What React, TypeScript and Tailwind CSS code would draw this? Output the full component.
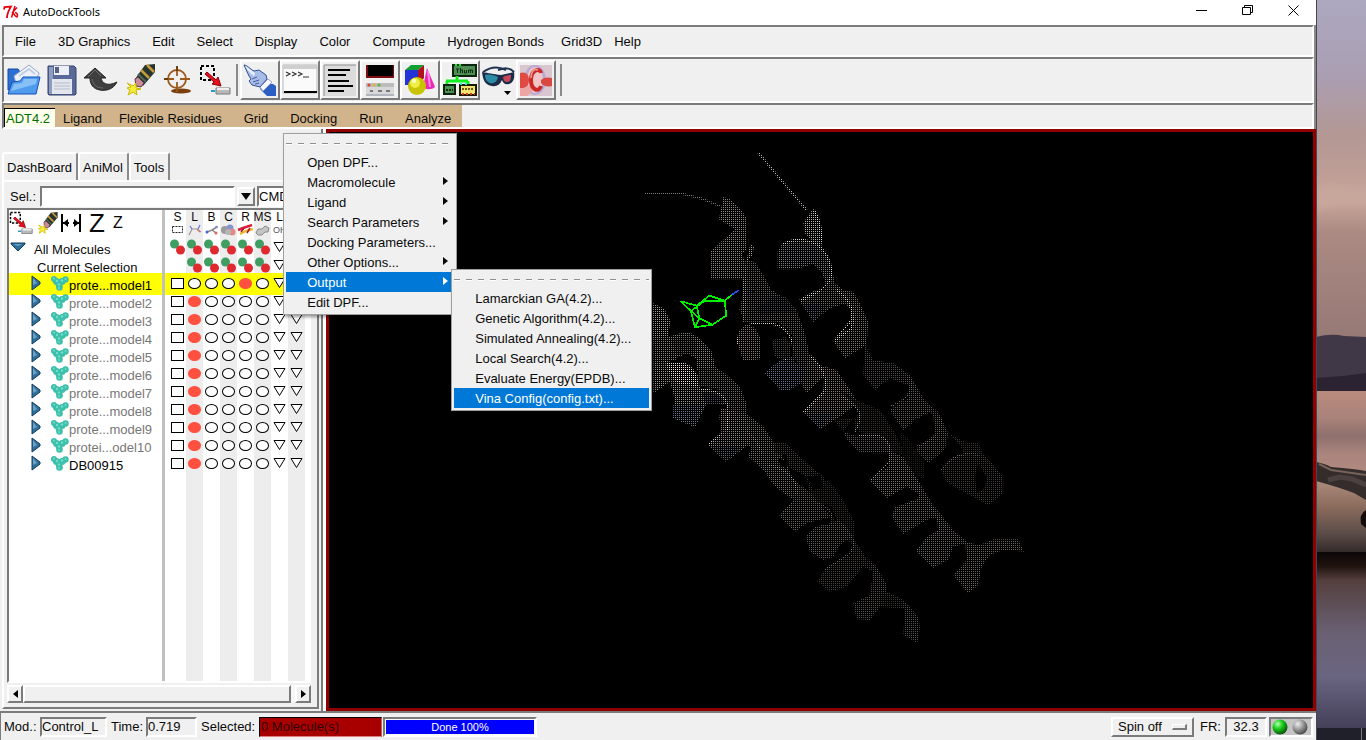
import React from "react";

const sunken = "border-2 border-t-[#7b7b7b] border-l-[#7b7b7b] border-r-white border-b-white";
const field = "border-2 border-t-[#7b7b7b] border-l-[#7b7b7b] border-r-white border-b-white";
const raised = "border-2 border-t-white border-l-white border-r-[#7b7b7b] border-b-[#7b7b7b]";

/* ---------- small icons ---------- */

function FeatherLogo() {
  return (
    <svg width="16" height="14" viewBox="0 0 16 14" fill="none" stroke="#e8000c" strokeWidth="1.8">
      <path d="M1 4.500 1.500 2l6.500-.5C6 5 4 8 4 13" />
      <path d="M12 1 8.500 12.500M9 8l5-5.500M10 7.500c1 2 2 4 4 4.500 1-2 .5-4-2-4.500" strokeWidth="1.500" />
    </svg>
  );
}

function OpenIcon() {
  return (
    <svg width="34" height="32" viewBox="0 0 34 32">
      <path d="M1 5h10l2 3h14v18H1z" fill="#2d6fd0" stroke="#1848a8" />
      <path d="M7 12 22 1l10 8-4 10H9z" fill="#eef2fc" stroke="#9aa8c8" />
      <path d="M12 12 22 5l6 5" fill="none" stroke="#c3cde6" strokeWidth="2" />
      <path d="M1 30 5 18l8-1 3-4h17l-4 17z" fill="#4f9bee" stroke="#1750b8" />
      <path d="m4 27 3-7 8-1 2-4h13l-1 5z" fill="#9fd0fa" opacity=".7" />
    </svg>
  );
}

function SaveIcon() {
  return (
    <svg width="30" height="32" viewBox="0 0 30 32">
      <path d="M1 2h26l2 2v26l-1 1H2l-1-1z" fill="#596a98" stroke="#34406c" />
      <path d="M2 3h4v27H2z" fill="#8f9cc2" />
      <path d="M7 2h15v9H7z" fill="#eceff5" />
      <path d="M8 3h4v6H8z" fill="#52618c" />
      <path d="M5 15h20v15H5z" fill="#e4e6ee" />
      <path d="M7 19h16M7 22h16M7 25h16" stroke="#b9bdcc" />
    </svg>
  );
}

function UndoIcon() {
  return (
    <svg width="36" height="28" viewBox="0 0 36 28">
      <path d="M1 12 12 2l11 10h-5c1 5 6 9 16 4-4 8-12 9-17 8-7-1-10-6-10-12z" fill="#3f3f3f" stroke="#242424" />
      <path d="m5 11 7-7 6 6M9 13c1 6 5 9 11 9" fill="none" stroke="#6b6b6b" />
    </svg>
  );
}

function EraserIcon({ size }: { size: number }) {
  return (
    <svg width={size} height={size} viewBox="0 0 32 32">
      <path d="m20 1 10-1v8L18 22l-8-7z" fill="#26332f" />
      <path d="m16 6 8 8M22 1l7 7" stroke="#c79a3a" strokeWidth="2.500" />
      <path d="m13 10 8 8" stroke="#4d6b52" strokeWidth="2" />
      <path d="m10 15 3-2 6 6-3 4-5-1z" fill="#c98b97" stroke="#623a44" />
      <path d="m2 19 6 3 3-3 0 5 5 1-5 1 1 5-4-3-5 3 2-5-3-2 4-1z" fill="#f7ee3a" stroke="#cdb800" />
    </svg>
  );
}

function TargetIcon() {
  return (
    <svg width="30" height="32" viewBox="0 0 30 32">
      <ellipse cx="18" cy="27" rx="10" ry="2.500" fill="#7a3f0c" />
      <circle cx="14" cy="15" r="9" fill="none" stroke="#9c5a1c" strokeWidth="1.800" />
      <path d="M14 2v10M14 18v10M1 15h10M17 15h10" stroke="#9c5a1c" strokeWidth="1.800" />
      <path d="M14 2v5M1 15h4" stroke="#5f3208" strokeWidth="1.500" />
    </svg>
  );
}

function SelectIcon({ size }: { size: number }) {
  return (
    <svg width={size} height={size} viewBox="0 0 32 32">
      <path d="M2 2h13v14H2z" fill="none" stroke="#000" strokeWidth="2" strokeDasharray="3 2" />
      <path d="m8 8 9 8 2-3 3 9-9-2 2-2-9-8z" fill="#e8101c" stroke="#8a0008" />
      <path d="M17 24h14v6H17z" fill="#b9b9b9" stroke="#7a7a7a" />
      <path d="M18 25h12" stroke="#efefef" strokeWidth="2" />
      <path d="M12 26h4v2h-4z" fill="#2a9bd0" />
    </svg>
  );
}

function HandIcon() {
  return (
    <svg width="34" height="34" viewBox="0 0 34 34">
      <path d="m20 20 10 1 3 2v10h-9l-7-7z" fill="#2c5fc4" />
      <path d="m17 24 8-8 4 3-9 9z" fill="#f8faff" stroke="#9aa9cc" />
      <path d="M1 2c3 0 6 4 10 6l5-1 7 5 1 4-7 8-8-2-3-4 2-2-2-3z" fill="#a8bcea" stroke="#34508e" />
      <path d="M2 3c3 1 7 5 10 7l-1 3C8 11 4 7 2 3z" fill="#e8eefc" />
      <path d="m9 16 5-2M10 19l6-2M12 21l4-1" fill="none" stroke="#44619f" />
    </svg>
  );
}

function TerminalIcon() {
  return (
    <svg width="36" height="34" viewBox="0 0 36 34">
      <path d="M1 2h34v28H1z" fill="#fafafa" stroke="#bdbdbd" />
      <path d="M1 2h34v4H1z" fill="#cfcfcf" />
      <path d="M2 29h33" stroke="#000" strokeWidth="2" />
      <path d="m4 9 4 2-4 2m6-4 4 2-4 2m6-4 4 2-4 2M21 14h6" fill="none" stroke="#333" strokeWidth="1.200" />
    </svg>
  );
}

function TextIcon() {
  return (
    <svg width="34" height="34" viewBox="0 0 34 34">
      <path d="M1 2h32v31H1z" fill="#dcdcdc" />
      <path d="M1 33V2h32" fill="none" stroke="#8c8c8c" />
      <path d="M5 7h22M5 12h18M5 18h21M5 23h25M5 28h16" stroke="#000" strokeWidth="2" />
    </svg>
  );
}

function WindowsIcon() {
  return (
    <svg width="30" height="34" viewBox="0 0 30 34">
      <path d="M1 2h28v13H1z" fill="#7d0c12" />
      <path d="M3 2h25v11H3z" fill="#000" />
      <path d="M1 20h28v13H1z" fill="#d8d8d8" />
      <path d="M1 20h28v4H1z" fill="#bcbcbc" />
      <circle cx="4" cy="22" r="1.500" fill="#e0453c" />
      <circle cx="9" cy="22" r="1.500" fill="#e6b23a" />
      <circle cx="14" cy="22" r="1.500" fill="#62b13e" />
      <path d="M5 28h3m5 0h4m4 0h4" stroke="#777" strokeWidth="2" />
      <path d="M1 32h28" stroke="#8a94a8" />
    </svg>
  );
}

function ShapesIcon() {
  return (
    <svg width="32" height="34" viewBox="0 0 32 34">
      <path d="M1 7h13v15H1z" fill="#2433d8" />
      <path d="m1 7 6-5h13l-6 5z" fill="#12a032" />
      <path d="m14 7 6-5v13l-6 7z" fill="#b01020" />
      <path d="m23 5 8 19c-3 3-10 3-12 0z" fill="#ee28b4" />
      <path d="m24 8 2 16" stroke="#ff8be0" strokeWidth="2" />
      <circle cx="13" cy="23" r="9" fill="#c8c400" />
      <circle cx="11" cy="20" r="5" fill="#eeee48" />
      <circle cx="10" cy="18" r="2" fill="#ffffc4" />
    </svg>
  );
}

function NetworkIcon() {
  return (
    <svg width="34" height="34" viewBox="0 0 34 34">
      <path d="M10 2h23v11H10z" fill="#4d8f55" stroke="#0c240c" strokeWidth="2" />
      <path d="M13 6h3m-1.500 0v4m3-5v5m0-3h2v3m2-3v3h2v-3m2 3V7h2v3m0-3h2v3" stroke="#10300f" fill="none" />
      <path d="M14 13v5M3 18h22M4 18v3M25 18v3" stroke="#10f020" strokeWidth="3" />
      <path d="M1 22h11v9H1z" fill="#4d8f55" stroke="#0c240c" strokeWidth="2" />
      <path d="M3 27h7" stroke="#10300f" strokeWidth="2" strokeDasharray="2 1" />
      <path d="M17 22h16v10H17z" fill="#f2e46c" stroke="#1a1a00" strokeWidth="2" />
      <path d="M19 26h12" stroke="#6b5a20" strokeWidth="2" strokeDasharray="2 1" />
      <path d="M19 31h13" stroke="#d03a20" strokeWidth="2" strokeDasharray="2 2" />
      <path d="M12 2h2m2 0h2" stroke="#10f020" strokeWidth="2" />
      <path d="M17 21h2m3 0h2" stroke="#20e8e0" strokeWidth="2" />
    </svg>
  );
}

function GlassesIcon() {
  return (
    <svg width="34" height="34" viewBox="0 0 34 34">
      <path d="M2 9C9 4 17 3 25 7M17 7c6-2 11-3 16 2" fill="none" stroke="#20304f" strokeWidth="2" />
      <path d="M1 9c7 1 11 2 19 3l13-3c1 7-1 11-5 12-4 1-6-1-7-4-2 5-6 7-10 6C4 22 2 17 1 9z" fill="#1c2c48" />
      <path d="M4 12c4-1 9 0 13 2-1 5-4 7-8 6-3-1-5-4-5-8z" fill="#2b8aa4" />
      <path d="M22 14c2-1 5-2 8-2 0 5-1 7-4 7-2 0-4-2-4-5z" fill="#c4485a" />
      <path d="M23 28h7l-3.500 4z" fill="#000" />
    </svg>
  );
}

function OrbitalIcon() {
  return (
    <svg width="34" height="34" viewBox="0 0 34 34">
      <path d="M1 2h32v31H1z" fill="#d9c6cf" />
      <ellipse cx="16" cy="17" rx="11" ry="15" fill="#b8a9d4" />
      <ellipse cx="16" cy="17" rx="8" ry="13" fill="#efc5c5" />
      <path d="M1 10c5-2 9 1 9 7s-4 9-9 8z" fill="#e04a42" />
      <path d="M1 26c5-1 9-3 12-6l4 5-9 8H1z" fill="#eda5a4" />
      <path d="M22 17c3-3 7-3 11-2v8c-4 1-9 0-11-3z" fill="#d84840" />
      <path d="M22 10c-1-6-10-3-10 7s8 13 10 6" fill="none" stroke="#c92a28" strokeWidth="4" />
      <path d="M19 7c-4-2-7 2-7 8" fill="none" stroke="#f49a90" strokeWidth="1.500" />
    </svg>
  );
}

function MoleculeIcon() {
  return (
    <svg width="18" height="15" viewBox="0 0 18 15" className="block">
      <g fill="#3dbfaa">
        <circle cx="3" cy="3" r="3" />
        <circle cx="5.500" cy="5.500" r="3.500" />
        <circle cx="8" cy="8" r="3.500" />
        <circle cx="8.500" cy="11.500" r="3.300" />
        <circle cx="11" cy="5.500" r="3.500" />
        <circle cx="14.500" cy="3.500" r="3.200" />
      </g>
      <g fill="#6fdfce">
        <circle cx="3" cy="2.500" r="1" />
        <circle cx="6" cy="5" r="1.200" />
        <circle cx="8" cy="8.500" r="1.200" />
        <circle cx="8" cy="12" r="1" />
        <circle cx="11" cy="4.500" r="1.200" />
        <circle cx="14.500" cy="3" r="1" />
      </g>
    </svg>
  );
}

function ExpandIcon() {
  return (
    <svg width="10" height="16" viewBox="0 0 10 16" className="block">
      <path d="M1 1v14l8-6V7z" fill="#2f6f9c" stroke="#123c5c" />
      <path d="M2 3v7l4-2z" fill="#6ca2c6" />
    </svg>
  );
}

function CollapseIcon() {
  return (
    <svg width="16" height="10" viewBox="0 0 16 10" className="block">
      <path d="M1 1h14v1L8 9 1 2z" fill="#2f6f9c" stroke="#123c5c" />
      <path d="M3 2h9L8 4z" fill="#6ca2c6" />
    </svg>
  );
}

function FitIcon() {
  return (
    <svg width="22" height="20" viewBox="0 0 22 20" stroke="#000" strokeWidth="2">
      <path d="M2 1v18M20 1v18M3 10h6M13 10h6" />
      <path d="m3 10 5-4v8zM19 10l-5-4v8z" fill="#000" stroke="none" />
    </svg>
  );
}

function PairDots() {
  return (
    <svg width="17" height="16" viewBox="0 0 17 16" className="block">
      <circle cx="5.500" cy="5" r="4.500" fill="#3f9f63" />
      <circle cx="11.500" cy="11" r="4.500" fill="#e02a30" />
    </svg>
  );
}

function DownTriangle() {
  return (
    <svg width="13" height="12" viewBox="0 0 13 12" className="block">
      <path d="M1 1.500h11L6.500 10.500z" fill="#fff" stroke="#000" />
    </svg>
  );
}

function ColumnGlyph({ kind }: { kind: string }) {
  return (
    <svg width="17" height="12" viewBox="0 0 17 12" className="block">
      {kind === "select" && <path d="M3.500 2.500h10v6h-10z" fill="none" stroke="#222" strokeDasharray="2 1" />}
      {kind === "lines" && (
        <g fill="none" strokeWidth="1.200">
          <path d="m3 11 3-6 5 0 4 3" stroke="#999" />
          <path d="m4 2 2 3m6 0 2-4" stroke="#6674c8" />
          <path d="m11 5 3 3" stroke="#d07070" />
        </g>
      )}
      {kind === "balls" && (
        <g>
          <path d="m4 8 5-2 4 3M9 6l5-3" stroke="#888" strokeWidth="1.500" fill="none" />
          <circle cx="4" cy="8" r="1.500" fill="#4a5fe0" />
          <circle cx="13" cy="9" r="1.500" fill="#d66" />
          <circle cx="13.500" cy="3" r="1.300" fill="#7a88d8" />
        </g>
      )}
      {kind === "cpk" && (
        <g>
          <circle cx="5" cy="6" r="4" fill="#9a9a9a" />
          <circle cx="10" cy="4" r="3.500" fill="#8494cf" />
          <circle cx="12" cy="8" r="3.500" fill="#e08a88" />
          <circle cx="8" cy="8" r="3" fill="#b5b5b5" />
        </g>
      )}
      {kind === "ribbon" && (
        <g strokeWidth="2.500" fill="none">
          <path d="m1 6 5-2 9-3" stroke="#d8203c" />
          <path d="m3 10 6-3 7-2" stroke="#e8c030" />
          <path d="m4 8 3-4m3 5 3-5" stroke="#b01030" strokeWidth="1.500" />
        </g>
      )}
      {kind === "surface" && <path d="M2 9 4 5l4 0 3-3 4 2-1 4-3 0-3 3H4z" fill="#c4c4c4" stroke="#8a8a8a" />}
      {kind === "label" && (
        <text x="2" y="9" fontSize="9" fill="#555">OH</text>
      )}
    </svg>
  );
}

/* ---------- menus ---------- */

function Tearoff() {
  return (
    <div className="flex h-4 items-center">
      <div className="h-[2px] w-full bg-[repeating-linear-gradient(to_right,#8f8f8f_0_6px,transparent_6px_12px)]">
        <div className="h-px w-full translate-y-px bg-[repeating-linear-gradient(to_right,#ffffff_0_6px,transparent_6px_12px)]" />
      </div>
    </div>
  );
}

function MenuItem({ label, arrow, active, children }: { label: string; arrow?: boolean; active?: boolean; children?: React.ReactNode }) {
  return (
    <li className="relative">
      <button
        className={
          active
            ? "flex h-5 w-full items-center justify-between bg-[#0078d7] pr-[6px] pl-[21px] text-white"
            : "flex h-5 w-full items-center justify-between pr-[6px] pl-[21px]"
        }
      >
        <span className="pt-[1px]">{label}</span>
        {arrow && (
          <svg width="5" height="8" viewBox="0 0 5 8" className="-mt-[2px]">
            <path d="M0 0v8l5-4z" fill="currentColor" />
          </svg>
        )}
      </button>
      {children}
    </li>
  );
}

const menuBox = "absolute z-20 border border-[#a0a0a0] bg-[#f0f0f0] p-[2px] shadow-[2px_2px_3px_rgba(0,0,0,0.4)]";

function DockingMenu() {
  return (
    <ul className={`${menuBox} top-[28px] left-[4px] w-[174px]`}>
      <li><Tearoff /></li>
      <MenuItem label="Open DPF..." />
      <MenuItem label="Macromolecule" arrow />
      <MenuItem label="Ligand" arrow />
      <MenuItem label="Search Parameters" arrow />
      <MenuItem label="Docking Parameters..." />
      <MenuItem label="Other Options..." arrow />
      <MenuItem label="Output" arrow active>
        <ul className={`${menuBox} -top-[3px] left-[165px] w-[201px]`}>
          <li><Tearoff /></li>
          <MenuItem label="Lamarckian GA(4.2)..." />
          <MenuItem label="Genetic Algorithm(4.2)..." />
          <MenuItem label="Simulated Annealing(4.2)..." />
          <MenuItem label="Local Search(4.2)..." />
          <MenuItem label="Evaluate Energy(EPDB)..." />
          <MenuItem label="Vina Config(config.txt)..." active />
        </ul>
      </MenuItem>
      <MenuItem label="Edit DPF..." />
    </ul>
  );
}

/* ---------- bars ---------- */

function TitleBar() {
  return (
    <header className="flex h-[25px] shrink-0 items-start justify-between bg-white">
      <div className="flex h-6 items-center gap-1 pl-[3px] font-['Noto_Sans','Open_Sans',sans-serif] text-[11px] text-black">
        <FeatherLogo />
        <h1>AutoDockTools</h1>
      </div>
      <div className="flex h-5">
        <button aria-label="Minimize" className="flex w-[46px] items-center justify-center">
          <svg width="11" height="11" viewBox="0 0 11 11"><path d="M0 5.500h11" stroke="#000" /></svg>
        </button>
        <button aria-label="Restore" className="flex w-[46px] items-center justify-center">
          <svg width="11" height="11" viewBox="0 0 11 11" fill="none" stroke="#000"><path d="M.5 2.500h8v7h-8zM2.500 2.500v-2h8v7h-2" /></svg>
        </button>
        <button aria-label="Close" className="flex w-[46px] items-center justify-center">
          <svg width="11" height="11" viewBox="0 0 11 11" stroke="#000"><path d="m.5.5 10 10M10.500.5l-10 10" /></svg>
        </button>
      </div>
    </header>
  );
}

function MenuBar() {
  return (
    <nav className={`flex h-8 shrink-0 pt-[2px] ${sunken}`}>
      {["File", "3D Graphics", "Edit", "Select", "Display", "Color", "Compute", "Hydrogen Bonds"].map((m) => (
        <button key={m} className="px-[11px]">{m}</button>
      ))}
      {["Grid3D", "Help"].map((m) => (
        <button key={m} className="px-[6px]">{m}</button>
      ))}
    </nav>
  );
}

function Tool({ label, children }: { label: string; children: React.ReactNode }) {
  return (
    <button aria-label={label} className={`flex h-10 w-10 items-center justify-center ${raised}`}>
      {children}
    </button>
  );
}

function ToolBar() {
  return (
    <div className={`flex h-[46px] shrink-0 items-center ${sunken}`}>
      <div className="flex w-[232px] items-center gap-[6px] pl-[3px]">
        <button aria-label="Open"><OpenIcon /></button>
        <button aria-label="Save"><SaveIcon /></button>
        <button aria-label="Undo"><UndoIcon /></button>
        <button aria-label="Erase"><EraserIcon size={32} /></button>
        <button aria-label="Center"><TargetIcon /></button>
        <button aria-label="Select"><SelectIcon size={32} /></button>
      </div>
      <div className="mr-[2px] h-8 w-[2px] bg-[#8a8a8a]" />
      <Tool label="Pick"><HandIcon /></Tool>
      <Tool label="Python shell"><TerminalIcon /></Tool>
      <Tool label="Log"><TextIcon /></Tool>
      <Tool label="Windows"><WindowsIcon /></Tool>
      <Tool label="Geometry"><ShapesIcon /></Tool>
      <Tool label="Vision"><NetworkIcon /></Tool>
      <button aria-label="Stereo" className="flex w-9 justify-center"><GlassesIcon /></button>
      <Tool label="Orbitals"><OrbitalIcon /></Tool>
      <div className="ml-[4px] h-8 w-[2px] bg-[#8a8a8a]" />
    </div>
  );
}

function AdtBar() {
  return (
    <nav className={`flex h-[26px] shrink-0 ${sunken}`}>
      <div className="flex bg-[#d2b48c]">
        <button className="mt-[3px] w-[51px] border-t border-l border-black bg-[#ffffee] pt-[1px] text-left text-[#007000]">
          <span className="pl-[1px]">ADT4.2</span>
        </button>
        <button className="pt-[5px] pr-[6px] pl-[8px]">Ligand</button>
        <button className="px-[11px] pt-[5px]">Flexible Residues</button>
        <button className="px-[11px] pt-[5px]">Grid</button>
        <div className="relative flex">
          <button className="px-[11px] pt-[5px]">Docking</button>
          <DockingMenu />
        </div>
        <button className="px-[11px] pt-[5px]">Run</button>
        <button className="px-[11px] pt-[5px]">Analyze</button>
      </div>
    </nav>
  );
}

/* ---------- dashboard ---------- */

const models = [
  "prote...model1", "prote...model2", "prote...model3", "prote...model4", "prote...model5",
  "prote...model6", "prote...model7", "prote...model8", "prote...model9", "protei...odel10", "DB00915",
];
const columns = [
  ["S", "select"], ["L", "lines"], ["B", "balls"], ["C", "cpk"], ["R", "ribbon"], ["MS", "surface"], ["L", "label"], ["", ""],
];

function ModelRow({ name, index }: { name: string; index: number }) {
  const current = index === 0;
  const cell = current ? "bg-[#ffff00] p-0 shadow-[0_3px_0_#ffff00,0_-1px_0_#ffff00]" : "p-0";
  const on = current ? 4 : 1;
  return (
    <tr className="h-[18px]">
      <td className={cell}>
        <div className="flex h-[18px] items-center pl-[22px]">
          <button aria-label={`Expand ${name}`}><ExpandIcon /></button>
          <span className="ml-[10px]"><MoleculeIcon /></span>
          <span className={current || index === 10 ? "pt-[5px] text-black" : "pt-[5px] text-[#777777]"}>{name}</span>
        </div>
      </td>
      <td className="p-0" />
      <td className={cell}>
        <input type="checkbox" aria-label={`Select ${name}`} className="mr-[2px] ml-auto block h-[11px] w-[13px] appearance-none border border-black bg-white" />
      </td>
      {[1, 2, 3, 4, 5].map((c) => (
        <td key={c} className={cell}>
          <input
            type="checkbox"
            defaultChecked={c === on}
            aria-label={`${columns[c][0]} ${name}`}
            className="mx-auto block h-[11px] w-[13px] appearance-none rounded-[50%] border border-black bg-white checked:border-[#ff5040] checked:bg-[#ff5040]"
          />
        </td>
      ))}
      {[6, 7].map((c) => (
        <td key={c} className={cell}>
          <button aria-label={`Color ${name}`} className="mx-auto block"><DownTriangle /></button>
        </td>
      ))}
      <td className="p-0" />
    </tr>
  );
}

function GroupRow({ first }: { first?: boolean }) {
  return (
    <tr className="h-[18px]">
      <td className="p-0">
        <div className="flex h-[18px] items-center">
          {first ? (
            <>
              <button aria-label="Collapse all" className="w-[25px] pl-[1px]"><CollapseIcon /></button>
              <span className="pt-[5px]">All Molecules</span>
            </>
          ) : (
            <span className="pt-[5px] pl-[28px]">Current Selection</span>
          )}
        </div>
      </td>
      <td className="p-0" />
      <td className="p-0">{first && <div className="ml-1"><PairDots /></div>}</td>
      {[1, 2, 3, 4, 5].map((c) => (
        <td key={c} className="p-0"><PairDots /></td>
      ))}
      {[6, 7].map((c) => (
        <td key={c} className="p-0">
          <button aria-label="Color" className="mx-auto block"><DownTriangle /></button>
        </td>
      ))}
      <td className="p-0" />
    </tr>
  );
}

function MoleculeTable() {
  return (
    <table className="h-full w-full table-fixed border-collapse">
      <colgroup>
        <col className="w-[153px]" />
        <col className="w-[3px] bg-[#c0c0c0]" />
        <col className="w-[21px]" />
        <col className="w-[17px] bg-[#ededed]" />
        <col className="w-[17px]" />
        <col className="w-[17px] bg-[#ededed]" />
        <col className="w-[17px]" />
        <col className="w-[17px] bg-[#ededed]" />
        <col className="w-[17px]" />
        <col className="w-[17px] bg-[#ededed]" />
        <col />
      </colgroup>
      <thead>
        <tr className="h-[28px]">
          <th className="p-0 align-top font-normal">
            <div className="flex h-[25px] items-center">
              <button aria-label="Select" className="w-[28px]"><SelectIcon size={24} /></button>
              <button aria-label="Erase" className="w-[23px]"><EraserIcon size={22} /></button>
              <button aria-label="Fit"><FitIcon /></button>
              <button className="ml-[7px] self-start text-[26px] leading-[26px]">Z</button>
              <button className="ml-[8px] text-[16px]">Z</button>
            </div>
          </th>
          <th className="p-0" />
          {columns.map(([letter, kind], i) => (
            <th key={i} className="p-0 align-top text-[12px] leading-[14px] font-normal">
              <div className={i === 0 ? "flex flex-col items-center pl-1" : "flex flex-col items-center"}>
                <span className="h-[14px] whitespace-nowrap">{letter}</span>
                <ColumnGlyph kind={kind} />
              </div>
            </th>
          ))}
          <th className="p-0" />
        </tr>
      </thead>
      <tbody>
        <GroupRow first />
        <GroupRow />
        {models.map((name, i) => (
          <ModelRow key={name} name={name} index={i} />
        ))}
        <tr>
          {[0, 1, 2, 3, 4, 5, 6, 7, 8, 9, 10].map((c) => (
            <td key={c} className="p-0" />
          ))}
        </tr>
      </tbody>
    </table>
  );
}

function Dashboard() {
  return (
    <aside className="flex w-[326px] shrink-0 pl-[2px]">
      <div className="flex min-w-0 flex-1 flex-col pt-[23px] pb-[2px]">
        <div className="flex h-[28px] items-stretch">
          {["DashBoard", "AniMol", "Tools"].map((t) => (
            <button key={t} className="rounded-t-[3px] border-t-2 border-r-2 border-l-2 border-t-white border-r-[#8a8a8a] border-l-white pt-[2px] pr-[4px] pl-[3px]">{t}</button>
          ))}
        </div>
        <div className={`flex min-h-0 flex-1 flex-col pt-[3px] pr-[6px] pl-[3px] ${raised}`}>
          <div className="flex h-[23px] items-center">
            <label htmlFor="sel" className="w-[33px] pl-[3px]">Sel.:</label>
            <input id="sel" className={`h-[21px] w-[195px] bg-white px-1 ${field}`} />
            <button aria-label="Selection history" className={`mr-[2px] ml-[2px] flex h-[19px] w-[18px] items-center justify-center ${raised}`}>
              <svg width="10" height="7" viewBox="0 0 10 7"><path d="M0 0h10L5 7z" /></svg>
            </button>
            <input aria-label="Command level" defaultValue="CMD" className={`h-[21px] min-w-0 flex-1 bg-white ${field}`} />
          </div>
          <div className={`min-h-0 flex-1 overflow-hidden bg-white ${field}`}>
            <MoleculeTable />
          </div>
          <div className="mt-[2px] mb-[4px] flex h-[18px] bg-[#f7f7f7]">
            <button aria-label="Scroll left" className={`flex w-4 items-center justify-center bg-[#f0f0f0] ${raised}`}>
              <svg width="5" height="8" viewBox="0 0 5 8"><path d="M5 0v8L0 4z" /></svg>
            </button>
            <div className={`flex-1 bg-[#f0f0f0] ${raised}`} />
            <button aria-label="Scroll right" className={`ml-[4px] flex w-4 items-center justify-center bg-[#f0f0f0] ${raised}`}>
              <svg width="5" height="8" viewBox="0 0 5 8"><path d="M0 0v8l5-4z" /></svg>
            </button>
          </div>
        </div>
      </div>
      <div className="ml-[2px] w-[5px] border-l-2 border-[#7b7b7b] bg-white" />
    </aside>
  );
}

/* ---------- 3D viewer ---------- */

const upper: [string, string][] = [
  ["280,170 300,178 330,205 348,230 348,330 335,345 345,360 340,418 243,418 243,333 315,268 267,238 275,195", "#68625f"],
  ["345,360 375,365 400,405 395,425 375,445 355,480 348,545 328,510 338,480 340,420", "#4e4b49"],
  ["400,405 430,462 465,470 500,510 525,580 540,650 520,690 490,650 490,590 470,565 440,545 350,545 350,490 375,450", "#4c4846"],
  ["362,310 372,320 368,345 352,365 350,460 345,545 338,545 338,420 355,335", "#7a7673"],
  ["430,470 465,470 490,500 500,520 450,515 400,525 375,510", "#35343a"],
  ["325,575 350,550 375,565 390,590 390,658 340,663 325,620", "#625a55"],
  ["425,610 462,592 485,610 480,655 440,655", "#3a3735"],
  ["405,700 430,675 480,655 530,690 480,748 450,748", "#4e5060"],
  ["550,207 565,225 575,260 570,325 555,330 545,300 525,280 520,250 535,225", "#86827e"],
  ["443,335 455,312 500,297 545,308 575,330 600,365 605,400 590,440 575,395 550,372 500,388 443,388", "#5c5a5d"],
  ["605,385 615,430 640,450 665,485 600,505 550,545 510,485 590,445", "#56524f"],
  ["520,495 600,490 590,510 550,545", "#44454f"],
  ["640,450 670,455 690,490 690,610 645,652 610,600 665,565 665,500", "#5a5552"],
  ["68,490 100,505 120,545 115,585 68,600", "#7d7873"],
];

const lower: [string, string][] = [
  ["40,40 75,60 90,90 85,140 120,130 150,128 180,145 215,185 228,235 170,240 168,205 140,190 105,210 75,220 40,215", "#67625d"],
  ["95,150 150,135 170,160 165,190 110,195", "#4a4743"],
  ["40,215 75,220 150,225 175,255 180,295 245,310 262,345 200,340 165,412 100,385 105,330 90,275 40,310", "#75706b"],
  ["75,215 140,220 165,245 178,290 110,280 95,260", "#b0aaa4"],
  ["100,345 190,345 165,412 100,385", "#555766"],
  ["230,235 255,250 300,290 318,335 318,375 290,400 265,345 230,295 180,290 175,240", "#524d49"],
  ["185,305 235,312 255,340 200,345", "#3c3d48"],
  ["245,355 315,370 355,430 365,500 325,465 258,515 205,465 245,430 238,380", "#69625d"],
  ["215,470 310,470 258,515", "#474852"],
  ["318,370 370,410 400,455 440,520 470,600 460,630 400,585 375,545 325,500 335,465", "#575350"],
  ["400,455 440,460 490,510 550,560 580,630 510,620 500,560 445,530 440,495 405,490", "#34302e"],
  ["445,555 500,600 530,630 575,680 500,700 465,725 418,680 465,630", "#4b4846"],
  ["560,570 590,600 620,650 645,700 640,770 610,740 575,650 535,640 510,600", "#282523"],
  ["497,740 525,710 570,700 600,690 635,740 600,765 580,800 550,810 510,785", "#484543"],
  ["640,745 670,790 700,845 670,830 620,890 570,905 532,875 560,830 635,795", "#34312f"],
  ["680,800 710,830 738,880 740,905 700,950 690,905 700,850", "#3f3b39"],
  ["640,940 690,915 740,905 790,930 835,980 840,1010 832,1060 790,1035 795,955 720,950 690,990 650,988", "#3f3c3a"],
  ["725,910 790,930 785,953 725,952", "#292725"],
  ["310,10 400,3 440,30 470,60 460,85 430,70 375,75 350,95 315,95 298,60", "#4d4947"],
  ["395,150 440,140 455,190 405,200", "#2e2c2c"],
  ["505,195 540,225 590,240 630,300 655,340 600,380 540,418 490,365 550,300 552,260 500,310 485,285 470,130", "#5f5954"],
  ["500,375 580,375 540,418", "#4b4d5c"],
  ["375,250 420,210 460,200 490,275 450,300 420,300", "#4e5062"],
  ["600,300 650,330 720,360 760,420 800,500 745,480 735,440 660,430 640,400 660,360", "#292624"],
  ["580,390 640,385 610,425", "#292624"],
  ["610,425 650,438 710,430 745,455 750,490 700,490 655,485 625,455", "#444143"],
  ["745,480 790,500 840,580 850,620 800,590 740,625 688,570 745,530", "#575250"],
  ["780,420 815,460 855,520 855,570 820,550 790,500", "#1b1917"],
  ["840,580 870,630 900,680 860,690 790,732 755,680 765,650 835,630", "#4b4745"],
  ["885,650 940,720 985,760 940,770 925,810 880,833 828,785 860,740 895,720", "#4c4947"],
  ["975,755 1020,765 1060,748 1135,748 1152,785 1090,780 1050,795 1025,830 1015,885 985,912 940,855 980,810", "#4c4845"],
  ["480,30 520,3 620,3 640,50 640,70 615,40 570,50 520,95", "#56545a"],
  ["620,3 655,30 685,95 680,165 615,205 580,155 635,115 640,50", "#585350"],
  ["675,165 700,210 760,220 810,255 815,290 750,265 705,300 670,255", "#3d3a39"],
  ["810,255 850,325 880,365 850,375 790,420 748,360 805,325", "#474341"],
  ["850,330 895,365 925,430 915,480 865,520 826,480 885,430 880,380", "#443f3d"],
  ["925,430 975,455 1015,460 1035,500 975,500 960,465", "#2a2725"],
  ["903,540 940,500 1010,490 1035,495 1090,560 1090,610 1045,647 1000,620 950,595 920,575", "#302d2b"],
];

const holes = [
  "1015,520 1040,560 1035,595 1010,610 1005,560",
  "500,560 540,555 550,590 520,600",
  "350,130 385,125 400,150 375,185 360,190 360,150",
  "415,505 445,515 440,535 420,525",
  "820,390 870,375 880,400 850,430 820,425",
  "105,205 140,192 165,205 168,225 140,220",
];

function Protein() {
  return (
    <svg className="block h-full w-full" role="img" aria-label="Protein ribbon with ligand">
      <defs>
        <pattern id="dots" width="2" height="2" patternUnits="userSpaceOnUse">
          <rect y="1" width="1" height="1" fill="#fff" shapeRendering="crispEdges" />
        </pattern>
        <mask id="stipple" maskUnits="userSpaceOnUse" x="0" y="0" width="900" height="570">
          <rect width="900" height="570" fill="url(#dots)" />
        </mask>
      </defs>
      <g mask="url(#stipple)">
        <g className="brightness-[1.35]">
          <g transform="translate(311 158) scale(.3333)">
            {lower.map(([p, c]) => <polygon key={p} points={p} fill={c} />)}
            {holes.map((p) => <polygon key={p} points={p} fill="#000" />)}
            <g fill="none" stroke="#a8a4a0" strokeWidth="6">
              <path d="M180 298q90 0 85 75l-5 50M245 430l-40 35" />
              <path d="M292 165q0-65 70-67 95-2 98 85M450 160q0 60-68 90M508 195q60 50 45 110l-62 62" />
              <path d="M480 30q60-40 140-20 20 40 15 80l-50 60" />
            </g>
            <g fill="none" stroke="#7d7976" strokeWidth="6">
              <path d="M320 420q40 40 45 75M385 525q90 20 85 90M605 320q60 30 55 70l-15 35M655 438q110-20 95 75l-60 60" />
            </g>
            <g fill="none" stroke="#5b5755" strokeWidth="6">
              <path d="M465 630q-20 20-45 50M520 635q70 20 55 70M600 700q60 50 30 90l-75 50M800 530q50 50 35 100-50 10-78 50M860 635q50 60 35 90l-65 55M810 260q20 60-60 90M900 380q20 60-70 90M905 540q40-60 110-45" />
            </g>
          </g>
          <g transform="translate(301 8) scale(.3333)">
            {upper.map(([p, c]) => <polygon key={p} points={p} fill={c} />)}
            <g fill="none" stroke="#a8a4a0" strokeWidth="7">
              <path d="M385 38 460 128 530 210" stroke="#8d8983" />
              <path d="M45 161h110l60 15 55 22" stroke="#605c59" />
              <path d="M552 210q30 60 18 110M455 315q50-30 110 0 50 50 35 105-20 35-88 62M620 450q60 40 45 115l-52 38" />
            </g>
          </g>
        </g>
      </g>
      <g transform="translate(301 8) scale(.3333)" fill="none" stroke="#00f000" strokeWidth="5" shapeRendering="crispEdges">
        <path d="M152 484 200 497 238 467 284 482 289 527 248 554 195 562 183 513ZM284 484h-62l-39 29M200 497l8 38 40 19M183 513l25 22-13 27M222 484l-22 13M284 482l21-17" />
        <path d="m305 465 21-14" stroke="#3050f0" />
      </g>
    </svg>
  );
}

/* ---------- status bar ---------- */

function Lamp({ on }: { on?: boolean }) {
  return (
    <svg width="16" height="16" viewBox="0 0 16 16">
      <defs>
        <radialGradient id={on ? "lamp-on" : "lamp-off"} cx=".35" cy=".3" r=".75">
          <stop offset="0" stopColor={on ? "#b8ffb8" : "#eeeeee"} />
          <stop offset=".4" stopColor={on ? "#1fd41f" : "#a8a8a8"} />
          <stop offset="1" stopColor={on ? "#064a06" : "#444444"} />
        </radialGradient>
      </defs>
      <circle cx="8" cy="8" r="7.500" fill={on ? "url(#lamp-on)" : "url(#lamp-off)"} />
    </svg>
  );
}

function StatusBar() {
  return (
    <footer className="flex h-[29px] shrink-0 items-center justify-between border-t-2 border-l border-[#7b7b7b] pr-[3px] pl-[3px]">
      <div className="flex h-5 items-center">
        <span className="w-9">Mod.:</span>
        <output className={`h-5 w-[67px] leading-4 ${field}`}>Control_L</output>
        <span className="ml-1 w-[35px]">Time:</span>
        <output className={`h-5 w-[51px] leading-4 ${field}`}>0.719</output>
        <span className="ml-1 w-[58px]">Selected:</span>
        <output className="h-5 w-[123px] border border-t-black border-r-[#c06060] border-b-[#e08080] border-l-black bg-[#a80000] pl-[1px] leading-[18px] text-[#300000]">0 Molecule(s)</output>
        <div className={`ml-[1px] h-5 w-[154px] bg-[#f8f8f8] p-[1px] ${field}`}>
          <div role="progressbar" aria-valuenow={100} className="h-[14px] bg-[#0000ff] text-center text-[11px] leading-[14px] text-white">Done 100%</div>
        </div>
      </div>
      <div className="flex h-5 items-center">
        <button className={`flex h-5 w-[83px] items-center justify-between pr-[5px] pl-[5px] ${raised}`}>
          Spin off
          <span className="h-[6px] w-[15px] border-t border-r-2 border-b-2 border-l border-t-white border-r-[#7b7b7b] border-b-[#7b7b7b] border-l-white" />
        </button>
        <span className="ml-[6px] w-[25px]">FR:</span>
        <output className={`h-5 w-[42px] text-center leading-4 ${field}`}>32.3</output>
        <div className={`ml-[2px] flex h-5 w-[44px] items-center gap-1 bg-[#c4c4c4] pl-[1px] ${field}`}>
          <Lamp on />
          <Lamp />
        </div>
      </div>
    </footer>
  );
}

/* ---------- desktop behind the window ---------- */

function Wallpaper() {
  return (
    <div className="h-full w-[50px] shrink-0 overflow-hidden bg-[#4a4558]">
      <svg className="block h-full w-full" viewBox="0 0 50 740" preserveAspectRatio="none" aria-hidden="true">
        <defs>
          <linearGradient id="sky" x2="0" y2="1">
            <stop offset="0" stopColor="#aca8c0" />
            <stop offset=".22" stopColor="#aa9eb2" />
            <stop offset=".4" stopColor="#b49894" />
            <stop offset=".6" stopColor="#c6a398" />
            <stop offset=".68" stopColor="#ab8b83" />
            <stop offset="1" stopColor="#967875" />
          </linearGradient>
          <linearGradient id="sea" x2="0" y2="1">
            <stop offset="0" stopColor="#ba8b7d" />
            <stop offset=".3" stopColor="#a9827a" />
            <stop offset=".5" stopColor="#8f706c" />
            <stop offset=".7" stopColor="#aa857e" />
            <stop offset="1" stopColor="#b48b80" />
          </linearGradient>
          <linearGradient id="rock" x2="0" y2="1">
            <stop offset="0" stopColor="#ad8b7c" />
            <stop offset=".35" stopColor="#8a6b5c" />
            <stop offset=".7" stopColor="#5b4c48" />
            <stop offset="1" stopColor="#2c2424" />
          </linearGradient>
          <linearGradient id="shore" x2="0" y2="1">
            <stop offset="0" stopColor="#0c0708" />
            <stop offset=".08" stopColor="#20130f" />
            <stop offset=".16" stopColor="#543f3e" />
            <stop offset=".45" stopColor="#696072" />
            <stop offset=".7" stopColor="#6a6580" />
            <stop offset="1" stopColor="#45405a" />
          </linearGradient>
          <filter id="haze" x="-.2" width="1.400"><feGaussianBlur stdDeviation="3" /></filter>
        </defs>
        <rect width="50" height="340" fill="url(#sky)" />
        <path d="M-5 189q17-8 27-5t33 3v18q-30-6-60 8z" fill="#cbab9f" opacity=".5" filter="url(#haze)" />
        <path d="M0 337q15-4 28-1l22 1v54H0z" fill="#403747" />
        <path d="M0 378q25-1 50-5v18H0z" fill="#2b2331" />
        <rect y="391" width="50" height="90" fill="url(#sea)" />
        <path d="M0 462q10 2 15 5 25 2 35 4v34H0z" fill="#352d2c" />
        <path d="M3 464l12 6 35 5" stroke="#75625a" fill="none" strokeWidth="2" />
        <path d="m12 480 12-3 12 2 14 6" stroke="#4a4140" fill="none" strokeWidth="5" />
        <path d="M0 481q22 6 38 12l12 7v56H0z" fill="url(#rock)" />
        <path d="M50 510q-7 4-5 14l5 4z" fill="#120c0d" />
        <rect y="552" width="50" height="176" fill="url(#shore)" />
        <rect y="728" width="50" height="12" fill="#1f202a" />
        <path d="M45.500 728v12" stroke="#777" />
        <path d="M.5 0v740" stroke="#4b454f" />
      </svg>
    </div>
  );
}

export default function App() {
  return (
    <div className="flex h-screen overflow-hidden bg-[#f0f0f0] font-['Liberation_Sans',Arial,sans-serif] text-[13px] leading-[16px] text-[#0a0a0a]">
      <div className="flex min-w-0 flex-1 flex-col">
        <TitleBar />
        <div className="shrink-0 border-r-2 border-[#8a8a8a] pl-[2px]">
          <MenuBar />
          <ToolBar />
          <AdtBar />
        </div>
        <main className="flex min-h-0 flex-1">
          <Dashboard />
          <section className="min-w-0 flex-1 border-[3px] border-[#900000] bg-black">
            <Protein />
          </section>
        </main>
        <StatusBar />
      </div>
      <Wallpaper />
    </div>
  );
}
